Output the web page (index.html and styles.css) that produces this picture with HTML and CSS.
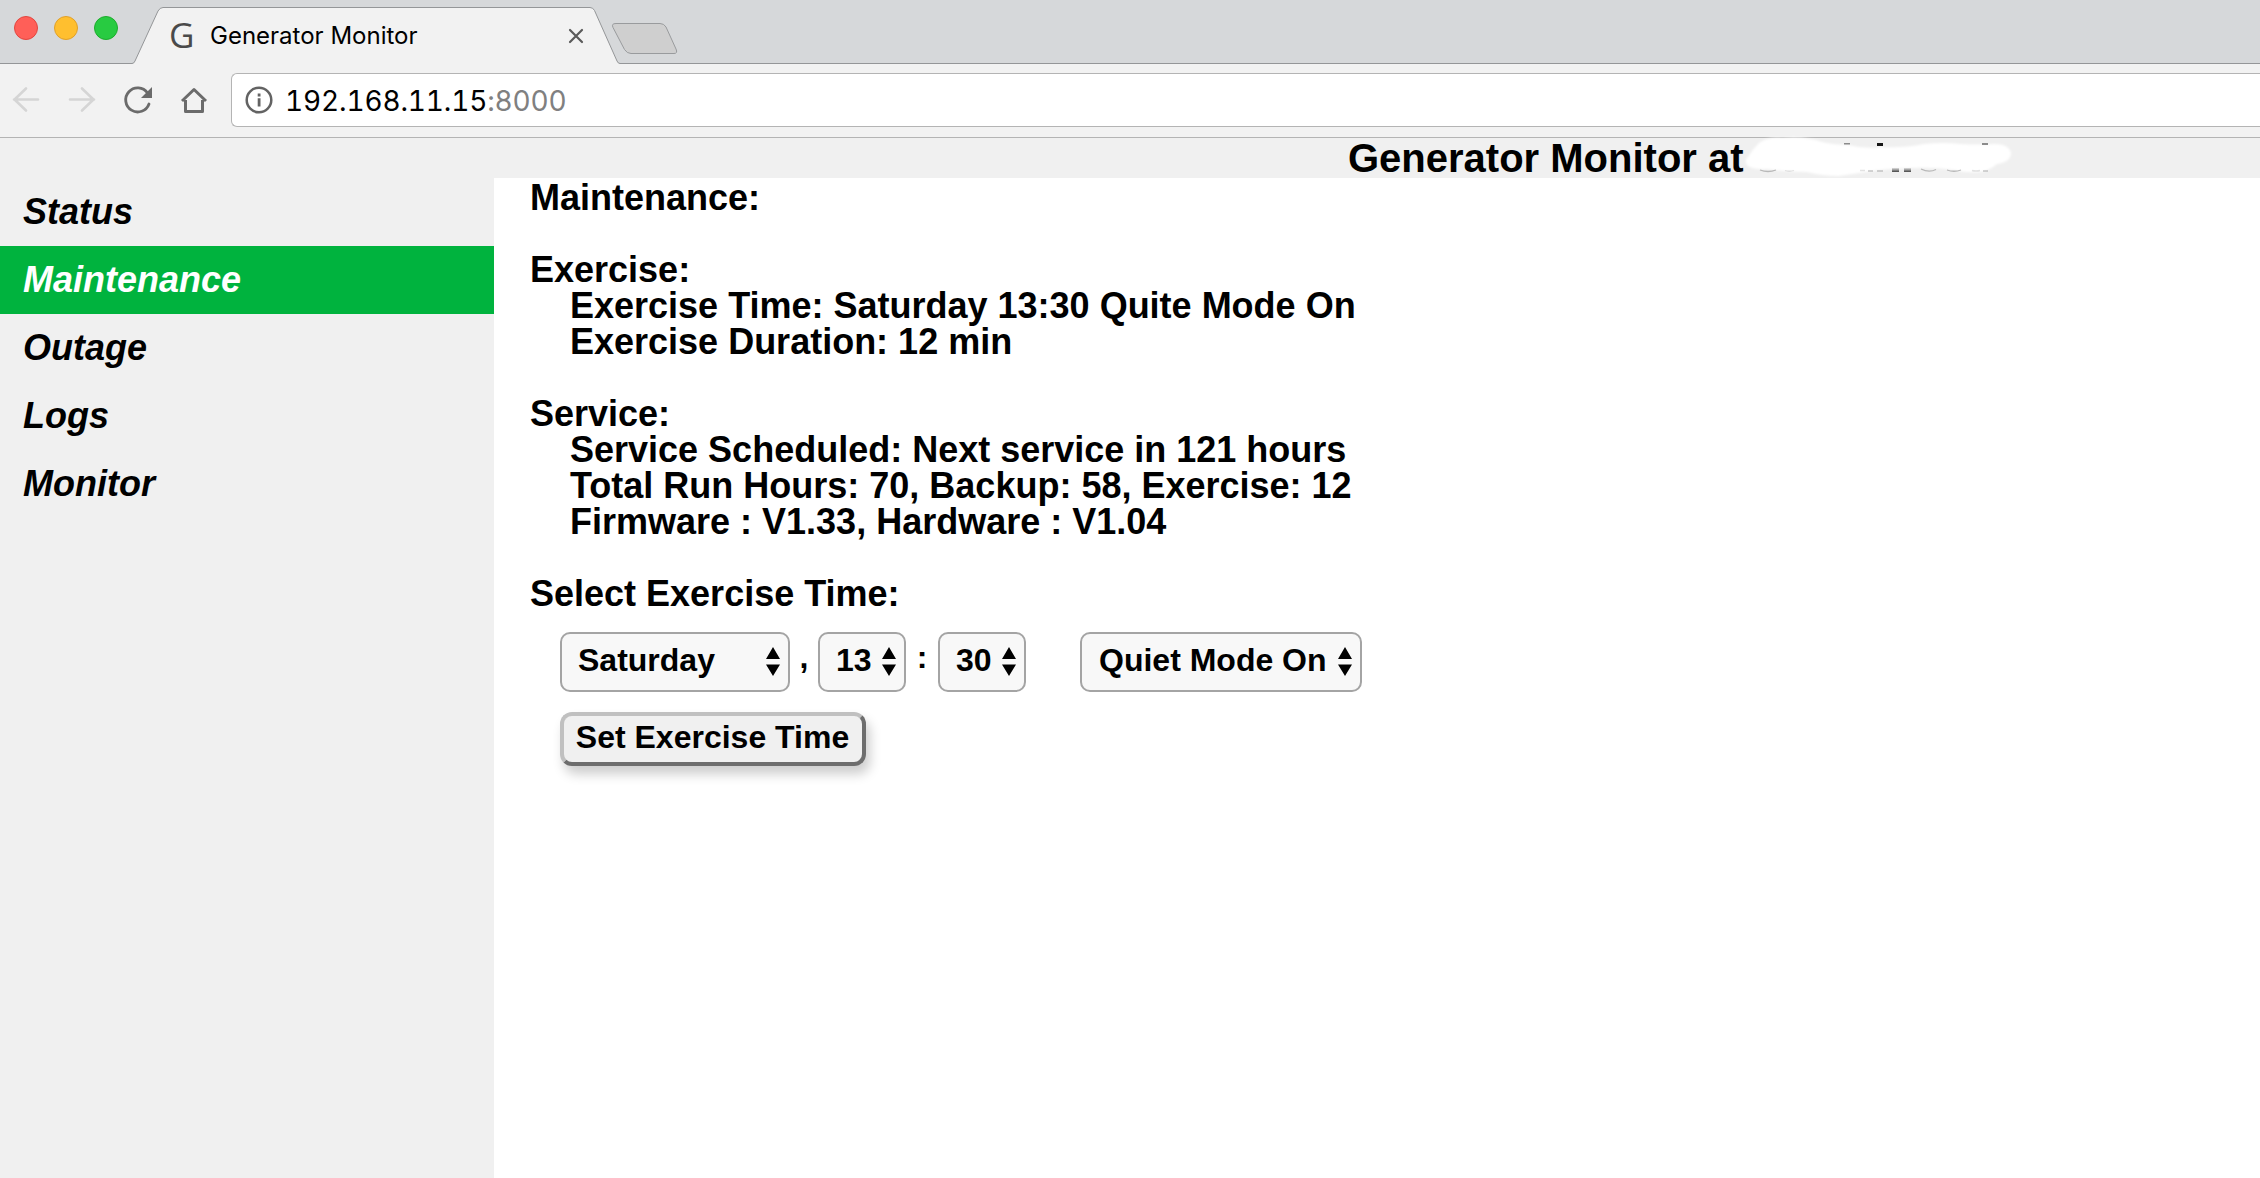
FILE: index.html
```html
<!DOCTYPE html>
<html lang="en">
<head>
<meta charset="utf-8">
<title>Generator Monitor</title>
<link rel="stylesheet" href="styles.css">
</head>
<body>
<header class="browser">
  <div class="tabstrip">
    <svg class="tab-shape" width="700" height="64" viewBox="0 0 700 64">
      <path d="M0 63.5H132Q134 63.5 135 61L158 11Q160 7.500 163 7.500H590Q593 7.500 594.500 10.500L617 61Q618 63.500 620 63.500H700V65H0Z" fill="#f2f2f2" stroke="#949698"/>
      <path d="M616 23.500H660Q664 23.500 666 27L676 49Q678 53.500 674 53.500H631Q627 53.500 624.500 49.500L613 27.500Q611 23.500 616 23.500Z" fill="#cfcfcf" stroke="#999b9d"/>
    </svg>
    <div class="lights">
      <span class="light red"></span><span class="light amber"></span><span class="light green"></span>
    </div>
    <div class="tab">
      <span class="favicon">G</span>
      <span class="tab-title">Generator Monitor</span>
      <svg class="close" width="16" height="16" viewBox="0 0 16 16"><path d="M2 2L14 14M14 2L2 14" stroke="#5a5a5a" stroke-width="2.200" stroke-linecap="round"/></svg>
    </div>
  </div>
  <div class="toolbar">
    <svg class="nav-icons" width="220" height="40" viewBox="0 0 220 40" fill="none">
      <g stroke="#d5d5d5" stroke-width="2.600" stroke-linecap="round">
        <path d="M38 19.500H14M26 8.500L14.500 19.500L26 30.500"/>
        <path d="M70 19.500H94M82 8.500L93.500 19.500L82 30.500"/>
      </g>
      <path d="M147.500 13A12 12 0 1 0 149 24" stroke="#6b6b6b" stroke-width="2.800" stroke-linecap="round"/>
      <path d="M152 7V18H141Z" fill="#6b6b6b"/>
      <path d="M182 21L194 9.500L206 21M185.500 20V31.500H202.500V20" stroke="#6b6b6b" stroke-width="3" stroke-linejoin="round"/>
    </svg>
    <div class="address">
      <svg width="28" height="28" viewBox="0 0 28 28"><circle cx="14" cy="14" r="12.300" fill="none" stroke="#636363" stroke-width="2.500"/><path d="M12.700 7.500h2.800v3h-2.800zM12.700 12.300h2.800v8.200h-2.800z" fill="#636363"/></svg>
      <span class="url">192.168.11.15<span class="port">:8000</span></span>
    </div>
  </div>
</header>
<div class="page">
  <div class="banner">
    <h1>Generator Monitor at</h1>
    <svg class="smudge" width="280" height="50" viewBox="0 0 280 50">
      <defs>
        <filter id="soft" x="-5%" y="-20%" width="110%" height="140%"><feGaussianBlur stdDeviation="1.300"/></filter>
        <linearGradient id="fade" x1="0" y1="0" x2="0" y2="1"><stop offset="0" stop-color="#e0e0e0"/><stop offset="1" stop-color="#444"/></linearGradient>
      </defs>
      <path filter="url(#soft)" fill="#fff" d="M8 27Q12 20 19 13Q27 7 42 8Q66 6 82 12Q94 15 108 15Q124 19 142 17Q164 18 184 14Q204 12 220 14Q242 15 254 14Q269 14 271 23Q271 32 257 34Q249 41 239 42Q226 43 214 40Q194 37 174 38Q156 38 139 40Q119 43 99 46Q82 46 67 42Q47 42 27 39Q8 40 6 33Q5 29 8 27Z"/>
      <g fill="#8b8b8b"><path d="M104 13h6v1.500h-6zM242 13h6v2h-6z"/><path d="M128 40.500h5v1h-5zM137 40.500h6v1h-6zM243 40.500h5v1h-5z" opacity=".7"/></g>
      <path fill="#161616" d="M137 13h6v3h-6z"/>
      <path fill="url(#fade)" d="M152 38h7v4h-7zM164 38h7v4h-7z"/>
      <g fill="none" stroke="#b8b8b8" stroke-width="1.300"><path d="M20 40Q28 43 36 40"/><path d="M181 39Q189 43 196 39.500"/><path d="M207 40Q214 42.500 221 40"/><path d="M45 40.500Q49 42 54 40.500M120 40.500H125M232 40.500Q236 41.500 240 40.500" opacity=".4"/></g>
    </svg>
  </div>
  <div class="columns">
    <nav class="menu">
      <a>Status</a><a class="active">Maintenance</a><a>Outage</a><a>Logs</a><a>Monitor</a>
    </nav>
    <main class="content">
      <p>Maintenance:</p>
      <section>
        <p>Exercise:</p>
        <p class="sub">Exercise Time: Saturday 13:30 Quite Mode On</p>
        <p class="sub">Exercise Duration: 12 min</p>
      </section>
      <section>
        <p>Service:</p>
        <p class="sub">Service Scheduled: Next service in 121 hours</p>
        <p class="sub">Total Run Hours: 70, Backup: 58, Exercise: 12</p>
        <p class="sub">Firmware : V1.33, Hardware : V1.04</p>
      </section>
      <section>
        <p>Select Exercise Time:</p>
        <form class="schedule">
          <div class="selects">
            <div class="select day"><span>Saturday</span><svg width="14" height="30" viewBox="0 0 14 30"><path d="M7 0L14 12H0ZM7 29L14 17.500H0Z"/></svg></div>
            <span class="comma">,</span>
            <div class="select number"><span>13</span><svg width="14" height="30" viewBox="0 0 14 30"><path d="M7 0L14 12H0ZM7 29L14 17.500H0Z"/></svg></div>
            <span class="colon">:</span>
            <div class="select number"><span>30</span><svg width="14" height="30" viewBox="0 0 14 30"><path d="M7 0L14 12H0ZM7 29L14 17.500H0Z"/></svg></div>
            <div class="select mode"><span>Quiet Mode On</span><svg width="14" height="30" viewBox="0 0 14 30"><path d="M7 0L14 12H0ZM7 29L14 17.500H0Z"/></svg></div>
          </div>
          <button class="set" type="button">Set Exercise Time</button>
        </form>
      </section>
    </main>
  </div>
</div>
</body>
</html>
```
FILE: styles.css
```css
* { box-sizing: border-box; }
body { margin: 0; height: 1178px; overflow: hidden; background: #fff; color: #000; font-family: "Liberation Sans", Arial, sans-serif; display: flex; flex-direction: column; }
svg { display: block; flex: none; }
.tabstrip { height: 64px; position: relative; display: flex; background: linear-gradient(#d6d8da, #d6d8da) 0 0 / 100% 63px no-repeat, #949698; }
.tab-shape { position: absolute; left: 0; top: 0; }
.lights { position: relative; display: flex; gap: 16px; padding: 16px 0 0 14px; }
.light { width: 24px; height: 24px; border-radius: 50%; border: 1px solid; }
.red { background: #ff5f58; border-color: #e2463f; }
.amber { background: #ffbf2f; border-color: #e0a02a; }
.green { background: #28cb41; border-color: #1dac2c; }
.tab { position: relative; display: flex; align-items: center; width: 415px; height: 56px; margin: 8px 0 0 51px; font: 24px/30px Inter, sans-serif; }
.favicon { width: 41px; padding-bottom: 2px; font: 35px/36px "Open Sans", sans-serif; color: #4a4a4a; }
.tab-title { flex: 1; }
.toolbar { height: 74px; display: flex; align-items: flex-start; background: #f2f2f2; border-bottom: 1px solid #b4b4b4; padding-top: 9px; }
.nav-icons { margin: 7px 11px 0 0; }
.address { flex: 1; height: 54px; display: flex; align-items: center; gap: 12px; padding-left: 13px; background: #fff; border: 1px solid #b4b4b4; border-right: 0; border-radius: 6px 0 0 6px; }
.url { font: 28px/34px Inter, sans-serif; font-variant-numeric: tabular-nums; letter-spacing: -0.15px; padding-top: 2px; }
.port { color: #808080; }
.page { flex: 1; display: flex; flex-direction: column; font-weight: bold; }
.banner { position: relative; height: 40px; background: #f0f0f0; display: flex; padding-left: 1348px; }
.smudge { position: absolute; left: 1740px; top: -8px; }
h1 { margin: 0; font-size: 40px; line-height: 40px; white-space: nowrap; }
.columns { flex: 1; display: flex; }
.menu { width: 494px; background: #f0f0f0; font-size: 36px; font-style: italic; }
.menu a { display: block; height: 68px; line-height: 68px; padding-left: 23px; }
.menu .active { background: #00b33e; color: #fff; }
.content { padding: 2px 0 0 36px; font-size: 36px; line-height: 36px; white-space: nowrap; }
.content p { margin: 0; }
.content section { margin-top: 36px; }
.content .sub { padding-left: 40px; }
.schedule { padding: 20px 0 0 30px; font-size: 32px; }
.selects { display: flex; }
.select { height: 60px; display: flex; align-items: center; justify-content: space-between; padding: 0 8px 0 16px; border: 2px solid #a4a4a4; border-radius: 10px; background: #f8f8f8; }
.select span { padding-bottom: 4px; }
.day { width: 230px; }
.number { width: 88px; }
.mode { width: 282px; margin-left: 54px; padding-left: 17px; }
.comma, .colon { width: 28px; text-align: center; line-height: 51px; }
.colon { width: 32px; }
.set { display: block; margin-top: 20px; width: 306px; height: 54px; padding: 0 1px 4px 0; font: bold 32px/40px "Liberation Sans", Arial, sans-serif; color: #000; background: #f0f0f0; border: 4px solid; border-color: #c0c0c0 #6d6d6d #6d6d6d #c0c0c0; border-radius: 12px; box-shadow: 4px 8px 12px rgba(0,0,0,.2); }
```
